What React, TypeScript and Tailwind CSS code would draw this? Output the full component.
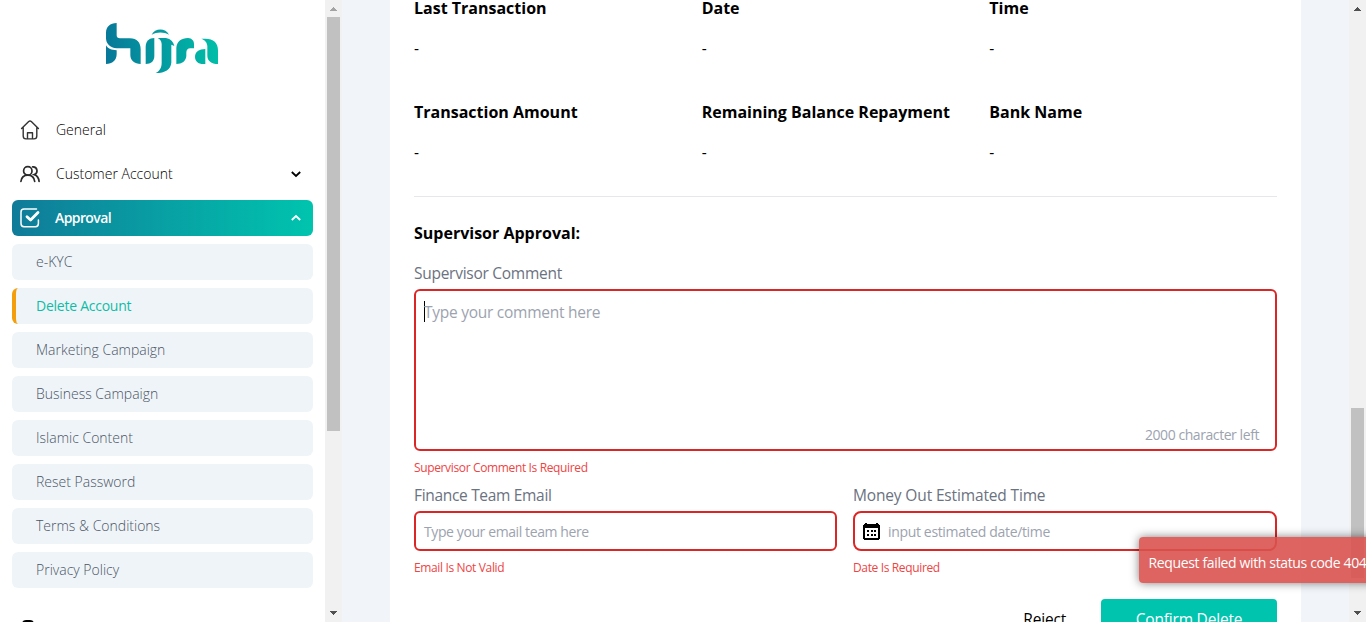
import type { ReactNode } from "react";

const subItems = [
  "e-KYC",
  "Delete Account",
  "Marketing Campaign",
  "Business Campaign",
  "Islamic Content",
  "Reset Password",
  "Terms & Conditions",
  "Privacy Policy",
];

const labelText = "text-[15.5px] leading-6 text-[#6b7280]";
const errorText = "mt-[9px] h-[15px] text-xs tracking-[-0.360px] text-[#ef4444]";

function Logo() {
  return (
    <svg className="mr-0.5 block h-[50px] w-28" viewBox="48 39 336 150" fill="url(#logo)">
      <defs>
        <linearGradient id="logo" gradientUnits="userSpaceOnUse" x1="48" y1="120" x2="384" y2="90">
          <stop offset="0" stopColor="#077899" />
          <stop offset="1" stopColor="#00bfa8" />
        </linearGradient>
      </defs>
      <path d="M80 39V76Q80 85 90 85H120C141 85 152 98 152 118V162C134 162 121 151 121 135V115H80C60 114 48 100 48 85V68C48 51 60 39 80 39Z" />
      <path d="M48 106C54 116 64 120 80 121V132C80 151 67 162 48 162Z" />
      <path d="M185 74C194 53 228 53 237 74C222 65 200 65 185 74Z" />
      <path d="M193 84V138C193 153 183 162 167 162V110C167 94 178 84 193 84Z" />
      <path d="M203 84H222C238 84 249 92 253 108L244 104V158C242 178 226 189 197 189C210 182 215 172 215 158V102C214 92 210 88 203 84Z" />
      <path d="M259 162V114C260 95 274 84 294 84C306 85 312 92 312 103V115H301C293 115 289 120 289 128V138C288 153 276 162 259 162Z" />
      <path d="M334 86H346C371 86 384 99 384 121V162C364 162 352 152 352 137V108C351 96 344 90 334 86Z" />
      <path d="M346 117V162H340C324 162 315 153 315 140C315 126 327 117 346 117Z" />
    </svg>
  );
}

function HomeIcon() {
  return (
    <svg className="h-5 w-5" viewBox="0 0 20 20" fill="none" stroke="#333" strokeWidth="1.4" strokeLinecap="round" strokeLinejoin="round">
      <path d="M1.6 8.6 8.7 1.5Q10 .4 11.300 1.500L18.400 8.600M3.200 7.600V16Q3.200 18.900 6 18.900H14Q16.800 18.900 16.800 16V7.600M7.500 18.800V12.700H12.500V18.800" />
    </svg>
  );
}

function PeopleIcon() {
  return (
    <svg className="h-5 w-5" viewBox="0 0 20 20" fill="none" stroke="#2b2b2b" strokeWidth="1.7" strokeLinecap="round">
      <circle cx="7.800" cy="6.900" r="4.200" />
      <path d="M.9 17.500C1.400 13.700 4 11.200 7.800 11.200S14.200 13.700 14.700 17.500M12.600 2.800C17.800 2.400 18.300 9.200 14.300 10.600C17.200 11.600 18.800 14.300 19.100 17.500" />
    </svg>
  );
}

function CheckIcon() {
  return (
    <svg className="h-5 w-5" viewBox="0 0 20 20" fill="none" stroke="#fff" strokeLinecap="round" strokeLinejoin="round">
      <path strokeWidth="1.500" d="M16.500 1H4Q1 1 1 4V15.500Q1 18.700 4 18.700H15.500Q18.400 18.700 18.400 15.500V12" />
      <path strokeWidth="2.800" d="M7 8.700 10.600 12 18 4.600" />
    </svg>
  );
}

function Chevron({ up = false }: { up?: boolean }) {
  return (
    <svg className="h-2.5 w-2.5" viewBox="0 0 10 10" fill="none" stroke="currentColor" strokeWidth="1.800">
      <path d={up ? "M.8 7 5 3 9.200 7" : "M.8 3 5 7 9.200 3"} />
    </svg>
  );
}

function CalendarIcon() {
  return (
    <svg className="h-[17px] w-[17px]" viewBox="0 0 17 17" shapeRendering="crispEdges">
      <path fillRule="evenodd" d="M2 0H4V1H13V0H15V1H16V2H17V16H16V17H1V16H0V2H1V1H2ZM2 5V15H15V5Z" />
      <path d="M4 7h2v2H4zM7.500 7h2v2h-2zM11 7h2v2h-2zM4 11h2v2H4zM7.500 11h2v2h-2zM11 11h2v2h-2z" />
    </svg>
  );
}

function Arrow({ up = false, color }: { up?: boolean; color: string }) {
  return (
    <svg className="h-1 w-[7px]" viewBox="0 0 7 4" fill={color} shapeRendering="crispEdges">
      <path d={up ? "M3 0h1v1h1v1h1v1h1v1H0V3h1V2h1V1h1z" : "M0 0h7v1H6v1H5v1H4v1H3V3H2V2H1V1H0z"} />
    </svg>
  );
}

function NavRow({ icon, label, chevron }: { icon: ReactNode; label: string; chevron?: boolean }) {
  return (
    <div className="flex h-9 items-center pl-2 pr-3">
      {icon}
      <span className="ml-4 flex-1 text-sm font-light text-black">{label}</span>
      {chevron && <Chevron />}
    </div>
  );
}

function Sidebar() {
  return (
    <aside className="flex w-[325px] shrink-0 flex-col bg-white">
      <div className="flex h-28 shrink-0 justify-center pt-[23px]">
        <Logo />
      </div>
      <nav className="flex flex-col gap-2 pl-3 pr-3">
        <NavRow icon={<HomeIcon />} label="General" />
        <NavRow icon={<PeopleIcon />} label="Customer Account" chevron />
        <div className="flex h-9 items-center rounded-md bg-linear-to-r/srgb from-[#107b99] to-[#00c4ae] pl-2 pr-3 text-white">
          <CheckIcon />
          <span className="ml-[15px] flex-1 text-sm font-semibold tracking-[-0.600px]">Approval</span>
          <Chevron up />
        </div>
        {subItems.map((item) => (
          <div
            key={item}
            className={
              item === "Delete Account"
                ? "flex h-9 items-center rounded-md border-l-4 border-[#f59e0b] bg-[#eff4f9] pl-5 text-sm font-medium tracking-[-0.250px] text-[#10bca5]"
                : "flex h-9 items-center rounded-md bg-[#eff4f9] pl-6 text-sm font-light text-[#4b5563]"
            }
          >
            {item}
          </div>
        ))}
      </nav>
      <div className="mt-8 ml-[22px] h-4 w-3 shrink-0 rounded-sm bg-black" />
    </aside>
  );
}

function Field({ label }: { label: string }) {
  return (
    <div>
      <div className="font-bold whitespace-nowrap">{label}</div>
      <div className="mt-4 text-[15.5px] leading-6">-</div>
    </div>
  );
}

export default function App() {
  return (
    <div className="relative flex h-[622px] w-[1366px] overflow-hidden bg-[#f1f5fa] font-['Open_Sans',sans-serif] text-base text-black">
      <Sidebar />
      <div className="flex w-[17px] shrink-0 flex-col items-center bg-[#f1f1f1] pt-[7px] pb-[7px]">
        <Arrow up color="#a3a3a3" />
        <div className="mt-1.5 h-[414px] w-[13px] bg-[#c1c1c1]" />
        <div className="mt-auto flex">
          <Arrow color="#505050" />
        </div>
      </div>

      <main className="ml-12 w-[911px] shrink-0 bg-white px-6">
        <div className="-mt-1 grid grid-cols-3 gap-y-10">
          <Field label="Last Transaction" />
          <Field label="Date" />
          <Field label="Time" />
          <Field label="Transaction Amount" />
          <Field label="Remaining Balance Repayment" />
          <Field label="Bank Name" />
        </div>
        <hr className="mt-8 border-[#e5e7eb]" />
        <h2 className="mt-6 font-bold">Supervisor Approval:</h2>
        <div className={`mt-4 tracking-[-0.270px] ${labelText}`}>Supervisor Comment</div>
        <div className="mt-1 flex h-[162px] flex-col justify-between rounded-md border-2 border-[#dc2626] px-2 pt-2 pb-1">
          <div className="flex h-6 items-center text-[15.5px] tracking-[-0.260px] text-[#9ca3af]">
            <span className="h-[21px] w-px bg-black" />
            <span className="-ml-px pt-px leading-6">Type your comment here</span>
          </div>
          <div className="pr-2 text-right text-sm tracking-[-0.430px] text-[#9ca3af]">2000 character left</div>
        </div>
        <div className={errorText}>Supervisor Comment Is Required</div>
        <div className="mt-2 grid grid-cols-[423px_424px] gap-4">
          <div>
            <div className={`tracking-[-0.320px] ${labelText}`}>Finance Team Email</div>
            <div className="mt-1 flex h-10 items-center rounded-md border-2 border-[#dc2626] px-2 pt-px text-sm tracking-[-0.400px] text-[#9ca3af]">
              Type your email team here
            </div>
            <div className={errorText}>Email Is Not Valid</div>
          </div>
          <div>
            <div className={`tracking-[-0.150px] ${labelText}`}>Money Out Estimated Time</div>
            <div className="mt-1 flex h-10 items-center gap-2 rounded-lg border-2 border-[#dc2626] px-2 text-sm tracking-[-0.340px] text-[#9ca3af]">
              <CalendarIcon />
              <span className="pt-px">input estimated date/time</span>
            </div>
            <div className={errorText}>Date Is Required</div>
          </div>
        </div>
        <div className="mt-6 flex justify-end text-[15.5px] leading-6 tracking-[-0.200px]">
          <div className="mr-[35px] flex h-10 items-center">Reject</div>
          <div className="flex h-10 w-44 items-center justify-center rounded bg-[#00c4ae] text-white">Confirm Delete</div>
        </div>
      </main>

      <div className="ml-auto flex w-[17px] shrink-0 flex-col items-center bg-[#f1f1f1] pt-[7px] pb-[7px]">
        <Arrow up color="#505050" />
        <div className="mt-[397px] h-[170px] w-[13px] bg-[#c1c1c1]" />
        <div className="mt-auto flex">
          <Arrow color="#505050" />
        </div>
      </div>

      <div className="absolute top-[537px] left-[1138.5px] flex h-[46px] w-[260px] items-center rounded bg-[#d9534f]/90 pt-1.5 pl-2.5 text-sm font-medium tracking-[-0.360px] whitespace-nowrap text-white shadow-[0_0_10px_rgba(0,0,0,0.5)]">
        Request failed with status code 404
      </div>
    </div>
  );
}
